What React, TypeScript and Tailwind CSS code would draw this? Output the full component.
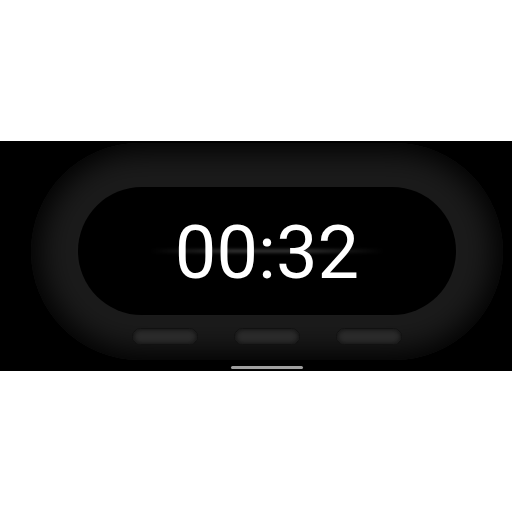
export default function App() {
  return (
    <div className="h-[512px] w-[512px] overflow-hidden bg-white" style={{ fontFamily: "Roboto, 'Liberation Sans', sans-serif" }}>
      <div className="mt-[141px] flex h-[230px] flex-col items-center overflow-hidden bg-black pl-[22px]">
        <div className="mt-[2px] flex h-[217px] w-[472px] shrink-0 flex-col items-center rounded-full bg-[#1b1b1b] pt-[44px] shadow-[inset_0_0_30px_8px_#000]">
          <div className="relative flex h-[128px] w-[378px] items-center justify-center rounded-full bg-black">
            <div className="absolute left-[72px] right-[72px] top-[62px] h-[4px] bg-[linear-gradient(90deg,transparent,#2e2e2e_35%,#2e2e2e_65%,transparent)] blur-[1.5px]" />
            <span className="relative mt-[3px] text-[74px] leading-none font-normal text-white">00:32</span>
          </div>
          <div className="mt-[13px] flex gap-[36px]">
            <button className="h-[17px] w-[66px] rounded-full border border-[#111] bg-[#2a2a2a] shadow-[inset_0_0_4px_1px_#141414]" />
            <button className="h-[17px] w-[66px] rounded-full border border-[#111] bg-[#2a2a2a] shadow-[inset_0_0_4px_1px_#141414]" />
            <button className="h-[17px] w-[66px] rounded-full border border-[#111] bg-[#2a2a2a] shadow-[inset_0_0_4px_1px_#141414]" />
          </div>
        </div>
        <div className="mt-[6px] h-[3px] w-[72px] rounded-full bg-[#9e9e9e]" />
      </div>
    </div>
  );
}
